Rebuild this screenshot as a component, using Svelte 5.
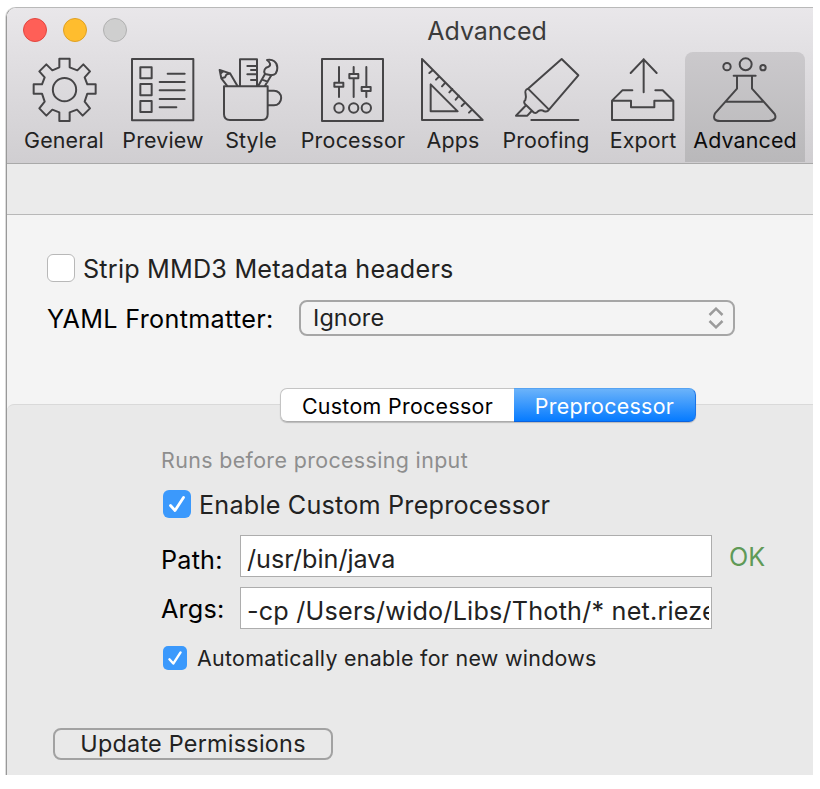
<script>
  const tabs = [
    { id: 'general', label: 'General', width: 98, box: '96 174 192 192' },
    { id: 'preview', label: 'Preview', width: 100, box: '393 174 192 192' },
    { id: 'style', label: 'Style', width: 76, box: '42 39 192 192' },
    { id: 'processor', label: 'Processor', width: 128, box: '348 39 192 192' },
    { id: 'apps', label: 'Apps', width: 72, box: '33 39 192 192' },
    { id: 'proofing', label: 'Proofing', width: 114, box: '312 39 192 192' },
    { id: 'export', label: 'Export', width: 80, box: '33 174 192 192' },
    { id: 'advanced', label: 'Advanced', width: 120, box: '339 174 192 192' }
  ];
  let active = $state('advanced');
</script>

{#snippet tick()}
  <svg class="tick" viewBox="0 0 28 28"><path d="M7.500 15.500 12 20.500 20.500 7.500" /></svg>
{/snippet}

<div class="window">
  <header>
    <div class="titlebar">
      <div class="lights"><i class="red"></i><i class="yellow"></i><i class="grey"></i></div>
      <h1>Advanced</h1>
    </div>
    <nav>
      {#each tabs as tab}
        <button class="tab {tab.id}" class:active={active === tab.id} style="width:{tab.width}px" onclick={() => (active = tab.id)}>
          <svg class="icon" viewBox={tab.box}>
            {#if tab.id === 'general'}
              <path d="M178 176H209V202L232 211 250 193 270 214 254 232 262 253H287V281H262L254 305 270 325 248 347 231 329 209 337V363H178V337L157 329 139 347 118 325 134 305 126 281H101V253H126L134 232 118 214 139 193 157 211 178 202Z" />
              <circle cx="193.500" cy="269" r="35" />
            {:else if tab.id === 'preview'}
              <path d="M396 177H580V361H396ZM421 202H455V235H421ZM421 252H455V286H421ZM421 303H455V336H421ZM503 221H554M479 246H554M479 271H554M479 297H554M479 322H529" />
            {:else if tab.id === 'style'}
              <path d="M57 124H188V208Q188 225 171 225H75Q57 225 57 208ZM188 137H207A21.500 22 0 0 1 207 181H188M105 124V43H156V124M127 63H156M138 75H156M127 88H156M138 105H156" />
              <path d="M66 122 49 100 44 75 75 85 97 122M49 100 60 97 64 89 75 85M44 75 54 79 47 86ZM160 122 180 87M199 91 180 122M171 104 188 110" />
              <path d="M180 87C174 78 180 66 191 65 199 60 195 51 186 45 203 41 217 51 217 68 217 82 209 90 199 91Z" />
            {:else if tab.id === 'processor'}
              <path d="M351 42H534V228H351ZM402 66V113M402 125V156M388 113H415V125H388ZM446 66V87M446 100V156M433 87H460V100H433ZM484 66V126M484 138V156M470 126H497V138H470Z" />
              <circle cx="402" cy="189" r="14" /><circle cx="446" cy="189" r="14" /><circle cx="484" cy="189" r="14" />
            {:else if tab.id === 'apps'}
              <path d="M36 42V225H218ZM62 118V199H143ZM69 75 58 84M88 94 78 104M106 113 96 124M127 132 118 142M147 152 137 164M166 172 155 183M187 193 177 203" />
            {:else if tab.id === 'proofing'}
              <path d="M354 131 455 42 505 91 417 194ZM354 131C336 138 354 150 346 165Q338 172 348 180L372 203Q378 206 384 199 393 192 403 199 412 202 417 194M346 183 318 212H352L365 198M364 225H505" />
            {:else if tab.id === 'export'}
              <path d="M36 302V360H220V302H163V322H93V302ZM36 302 67 271H97M220 302 188 271H166M131 277V178M92 219 131 178 170 219" />
            {:else}
              <circle cx="381" cy="200" r="11" /><circle cx="437" cy="193" r="18" /><circle cx="489" cy="203" r="8" />
              <path d="M401 227H467M411 227V266L345 340Q335 363 360 363H507Q533 360 524 342L456 266V227M378 305H489" />
            {/if}
          </svg>
          <span class="label">{tab.label}</span>
        </button>
      {/each}
    </nav>
  </header>
  <div class="strip"></div>
  <main>
    <label class="row strip-row">
      <span class="check"></span><span class="big">Strip MMD3 Metadata headers</span>
    </label>
    <div class="row yaml-row">
      <span class="big yaml">YAML Frontmatter:</span>
      <div class="select">
        <span>Ignore</span>
        <svg viewBox="0 0 16 22"><path d="M1.500 8 8 1.700 14.500 8M1.500 14 8 20.300 14.500 14" /></svg>
      </div>
    </div>
  </main>
  <section>
    <div class="segments">
      <button class="seg custom">Custom Processor</button>
      <button class="seg pre">Preprocessor</button>
    </div>
    <p class="hint">Runs before processing input</p>
    <label class="row enable">
      <span class="check checked">{@render tick()}</span><span class="big">Enable Custom Preprocessor</span>
    </label>
    <div class="row field">
      <span class="big name path-name">Path:</span>
      <div class="input"><span class="big path">/usr/bin/java</span></div>
      <span class="ok big">OK</span>
    </div>
    <div class="row field args-row">
      <span class="big name args-name">Args:</span>
      <div class="input"><span class="big args">-cp /Users/wido/Libs/Thoth/* net.rieze</span></div>
    </div>
    <label class="row auto">
      <span class="check checked small">{@render tick()}</span><span>Automatically enable for new windows</span>
    </label>
    <button class="update">Update Permissions</button>
  </section>
</div>

<style>
  :global(body) { background: #fff; }
  * { box-sizing: border-box; }
  .window {
    width: 807px; height: 768px; margin: 7px 0 0 6px; overflow: hidden;
    display: flex; flex-direction: column;
    border-left: 1px solid #999; border-top: 1px solid #b9b9b9; border-top-left-radius: 10px;
    box-shadow: -1px 0 0 #dcdcdc;
    font-family: Inter, sans-serif; font-size: 21.400px; color: #222; white-space: nowrap;
  }
  button { font: inherit; color: inherit; border: 0; background: none; padding: 0; }
  .big { font-size: 25.200px; letter-spacing: 0.200px; }
  header { height: 156px; flex: none; background: linear-gradient(#e9e7ea, #d0ced1); border-bottom: 1px solid #a9a9a9; }
  .titlebar { height: 44px; display: flex; align-items: center; }
  .lights { display: flex; gap: 16px; padding-left: 16px; width: 169px; }
  .lights i { width: 24px; height: 24px; border-radius: 50%; border: 1px solid; }
  .lights .red { background: #ff5f57; border-color: #e2463f; }
  .lights .yellow { background: #ffbd2e; border-color: #dfa023; }
  .lights .grey { background: #cfcfcf; border-color: #b1b1b1; }
  h1 { margin: 2px 0 0; width: 622px; text-align: center; font-size: 25px; font-weight: 400; line-height: 30px; color: #3b3b3b; }
  nav { display: flex; padding-left: 8px; height: 111px; }
  .tab { display: flex; flex-direction: column; align-items: center; padding-top: 6px; height: 110px; line-height: 24px; }
  .label { margin-top: 6px; letter-spacing: 0.150px; }
  .processor .label { letter-spacing: 0.250px; }
  .active { background: linear-gradient(#cbc9cc, #b9b8ba); border-radius: 8px 8px 0 0; margin-left: 2px; color: #0c0c0c; }
  .icon { width: 64px; height: 64px; flex: none; overflow: visible; fill: none; stroke: #464547; stroke-width: 6; stroke-linejoin: round; stroke-linecap: round; }
  .strip { height: 51px; flex: none; background: #ebebeb; border-bottom: 1px solid #b8b8b8; }
  main { height: 189px; flex: none; background: #f4f4f4; }
  .row { display: flex; align-items: center; }
  .check { width: 28px; height: 28px; flex: none; border: 1px solid #b8b8b8; border-radius: 6px; background: #fff; display: flex; }
  .checked { background: #3b99fc; border: 0; }
  .small { width: 24px; height: 24px; border-radius: 5px; }
  .tick { width: 100%; height: 100%; fill: none; stroke: #fff; stroke-width: 2.800; stroke-linecap: round; stroke-linejoin: round; }
  .strip-row { padding: 39px 0 0 40px; gap: 8px; height: 67px; line-height: 28px; }
  .strip-row .big { margin-top: 2px; }
  .yaml-row { margin: 18px 0 0 40px; height: 36px; }
  .yaml { width: 252px; color: #000; line-height: 38px; padding-top: 2px; letter-spacing: 0.310px; }
  .select { width: 436px; height: 36px; border: 2px solid #a6a6a6; border-radius: 8px; display: flex; justify-content: space-between; align-items: center; padding: 0 9px 0 12px; font-size: 23.400px; }
  .select span { margin-top: -2px; letter-spacing: 0.100px; }
  .select svg { width: 16px; height: 22px; fill: none; stroke: #9b9b9b; stroke-width: 2.500; }
  section { flex: 1; background: #e9e9e9; border-top: 1px solid #d9d9d9; border-top-left-radius: 7px; box-shadow: -8px -8px 0 #f4f4f4; clip-path: inset(-17px 0 0 0); }
  .segments { display: flex; margin: -17px 0 0 273px; width: 416px; height: 34px; border-radius: 7px; box-shadow: 0 1px 1px #0003; }
  .seg { flex: none; height: 34px; background: #fff; border: 1px solid #c4c4c4; border-bottom-color: #ababab; color: #000; padding-top: 2px; letter-spacing: 0.310px; }
  .custom { width: 234px; border-right: 0; border-radius: 7px 0 0 7px; }
  .pre { width: 182px; color: #fff; background: linear-gradient(#6bb3fa, #067bff); border-color: #56a3f2 #1a74e8 #0b62dd; border-left: 0; border-radius: 0 7px 7px 0; }
  .hint { margin: 24px 0 0 154px; line-height: 28px; color: #8e8e8e; letter-spacing: 0.370px; }
  .enable { margin: 16px 0 0 156px; gap: 8px; height: 28px; }
  .enable .big { padding-top: 2px; }
  .field { margin: 17px 0 0 154px; height: 42px; }
  .name { width: 79px; color: #000; }
  .path-name { padding-top: 8px; }
  .args-name { padding-top: 2px; }
  .input { width: 472px; height: 42px; background: #fff; border: 1px solid #adadad; padding: 5px 2px 0 6px; display: flex; align-items: center; }
  .input .big { overflow: hidden; width: 463px; line-height: 36px; }
  .input .path { letter-spacing: 0; }
  .ok { color: #5f9a57; margin-left: 17px; padding-top: 1px; letter-spacing: 0; }
  .args-row { margin-top: 10px; }
  .auto { margin: 17px 0 0 156px; gap: 10px; height: 24px; letter-spacing: 0.300px; }
  .update { display: block; margin: 58px 0 0 46px; width: 280px; height: 32px; border: 2px solid #a2a2a2; border-radius: 8px; font-size: 23.400px; line-height: 28px; letter-spacing: 0.240px; }
</style>
